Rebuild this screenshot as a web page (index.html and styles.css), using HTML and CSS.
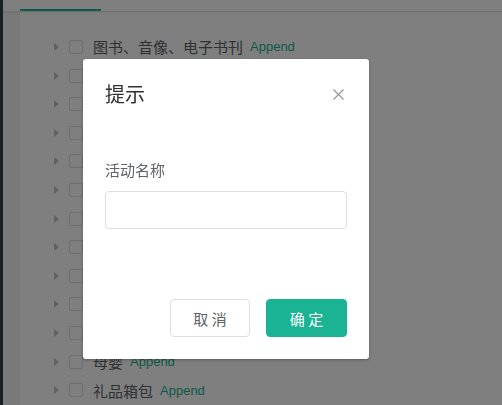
FILE: index.html
```html
<!DOCTYPE html>
<html lang="zh">
<head>
<meta charset="utf-8">
<title>提示</title>
<link rel="stylesheet" href="styles.css">
</head>
<body>
<div class="app">
  <aside class="nav"></aside>
  <div class="page">
    <div class="tabs"><div class="tab-bar"></div></div>
    <div class="body-row">
      <div class="gutter"></div>
      <main class="main">
        <ul class="tree">
          <li class="node"><span class="caret"></span><span class="check"></span><span class="label">图书、音像、电子书刊</span><span class="append">Append</span></li>
          <li class="node"><span class="caret"></span><span class="check"></span><span class="label">家用电器</span><span class="append">Append</span></li>
          <li class="node"><span class="caret"></span><span class="check"></span><span class="label">手机、数码</span><span class="append">Append</span></li>
          <li class="node"><span class="caret"></span><span class="check"></span><span class="label">电脑、办公</span><span class="append">Append</span></li>
          <li class="node"><span class="caret"></span><span class="check"></span><span class="label">家居、家具、家装</span><span class="append">Append</span></li>
          <li class="node"><span class="caret"></span><span class="check"></span><span class="label">男装、女装、童装</span><span class="append">Append</span></li>
          <li class="node"><span class="caret"></span><span class="check"></span><span class="label">美妆、个护清洁</span><span class="append">Append</span></li>
          <li class="node"><span class="caret"></span><span class="check"></span><span class="label">女鞋、箱包、钟表</span><span class="append">Append</span></li>
          <li class="node"><span class="caret"></span><span class="check"></span><span class="label">男鞋、运动、户外</span><span class="append">Append</span></li>
          <li class="node"><span class="caret"></span><span class="check"></span><span class="label">汽车、汽车用品</span><span class="append">Append</span></li>
          <li class="node"><span class="caret"></span><span class="check"></span><span class="label">食品、酒类、生鲜</span><span class="append">Append</span></li>
          <li class="node"><span class="caret"></span><span class="check"></span><span class="label">母婴</span><span class="append">Append</span></li>
          <li class="node"><span class="caret"></span><span class="check"></span><span class="label">礼品箱包</span><span class="append">Append</span></li>
        </ul>
      </main>
    </div>
  </div>
</div>

<div class="overlay">
  <div class="dialog">
    <div class="dialog-header">
      <span class="dialog-title">提示</span>
      <button class="dialog-close" aria-label="Close">
        <svg width="11" height="11" viewBox="0 0 11 11"><path d="M0.5 0.5 L10.5 10.5 M10.5 0.5 L0.5 10.5" stroke="#909399" stroke-width="1.1" fill="none"/></svg>
      </button>
    </div>
    <div class="dialog-body">
      <label class="field-label">活动名称</label>
      <input class="field-input" type="text">
    </div>
    <div class="dialog-footer">
      <button class="btn btn-default">取 消</button>
      <button class="btn btn-primary">确 定</button>
    </div>
  </div>
</div>
</body>
</html>
```

FILE: styles.css
```css
* { box-sizing: border-box; }
html, body { margin: 0; padding: 0; }
body {
  width: 502px;
  height: 405px;
  overflow: hidden;
  font-family: "Liberation Sans", "Noto Sans CJK SC", sans-serif;
  background: #fff;
}
.app {
  display: flex;
  height: 405px;
}
.nav {
  width: 3px;
  background: #2f4050;
  flex: none;
}
.page {
  flex: 1;
  display: flex;
  flex-direction: column;
}
.tabs {
  height: 12px;
  flex: none;
  background: #fff;
  border-bottom: 1px solid #e0e2e6;
  padding-left: 17px;
  display: flex;
  align-items: flex-end;
  box-shadow: 0 1px 2px rgba(0,0,0,0.06);
  position: relative;
  z-index: 1;
}
.tab-bar {
  width: 81px;
  height: 2px;
  background: #1ab394;
}
.body-row {
  flex: 1;
  display: flex;
}
.gutter {
  width: 17px;
  background: #f3f3f4;
  flex: none;
}
.main {
  flex: 1;
  background: #fff;
}
.tree {
  list-style: none;
  margin: 20.7px 0 0;
  padding: 0 0 0 34px;
}
.node {
  height: 28.6px;
  display: flex;
  align-items: center;
  color: #606266;
}
.caret {
  width: 0;
  height: 0;
  border-top: 4px solid transparent;
  border-bottom: 4px solid transparent;
  border-left: 5px solid #c0c4cc;
  margin-right: 10px;
}
.check {
  width: 14px;
  height: 14px;
  border: 1px solid #dcdfe6;
  border-radius: 2px;
  background: #fff;
  margin-right: 10px;
}
.label {
  font-size: 15px;
  font-family: "Noto Sans CJK SC", sans-serif;
}
.append {
  font-size: 13px;
  color: #1ab394;
  margin-left: 7px;
}
.overlay {
  position: fixed;
  inset: 0;
  background: rgba(0,0,0,0.5);
  display: flex;
  align-items: flex-start;
  z-index: 10;
}
.dialog {
  margin: 59px 0 0 83px;
  width: 286px;
  height: 300px;
  background: #fff;
  border-radius: 3px;
  box-shadow: 0 1px 3px rgba(0,0,0,0.3);
  display: flex;
  flex-direction: column;
  padding: 0 22px;
}
.dialog-header {
  display: flex;
  align-items: center;
  justify-content: space-between;
  height: 24px;
  margin-top: 82px;
  margin-top: 23px;
}
.dialog-title {
  font-family: "Noto Sans CJK SC", sans-serif;
  font-size: 20px;
  line-height: 24px;
  color: #303133;
}
.dialog-close {
  border: 0;
  background: none;
  padding: 0;
  width: 11px;
  height: 11px;
  margin-right: 3px;
  display: flex;
}
.dialog-body {
  display: flex;
  flex-direction: column;
  padding-top: 54px;
}
.field-label {
  font-family: "Noto Sans CJK SC", sans-serif;
  font-size: 15px;
  line-height: 20px;
  color: #606266;
}
.field-input {
  margin-top: 11px;
  width: 242px;
  height: 38px;
  border: 1px solid #dcdfe6;
  border-radius: 4px;
  outline: none;
}
.dialog-footer {
  margin-top: 70px;
  display: flex;
  justify-content: flex-end;
  gap: 16px;
}
.btn {
  height: 38px;
  border-radius: 4px;
  font-family: "Noto Sans CJK SC", sans-serif;
  font-size: 15px;
  padding: 0;
  cursor: pointer;
}
.btn-default {
  width: 80px;
  background: #fff;
  border: 1px solid #dcdfe6;
  color: #606266;
}
.btn-primary {
  width: 81px;
  background: #1ab394;
  border: 1px solid #1ab394;
  color: #fff;
}
```
